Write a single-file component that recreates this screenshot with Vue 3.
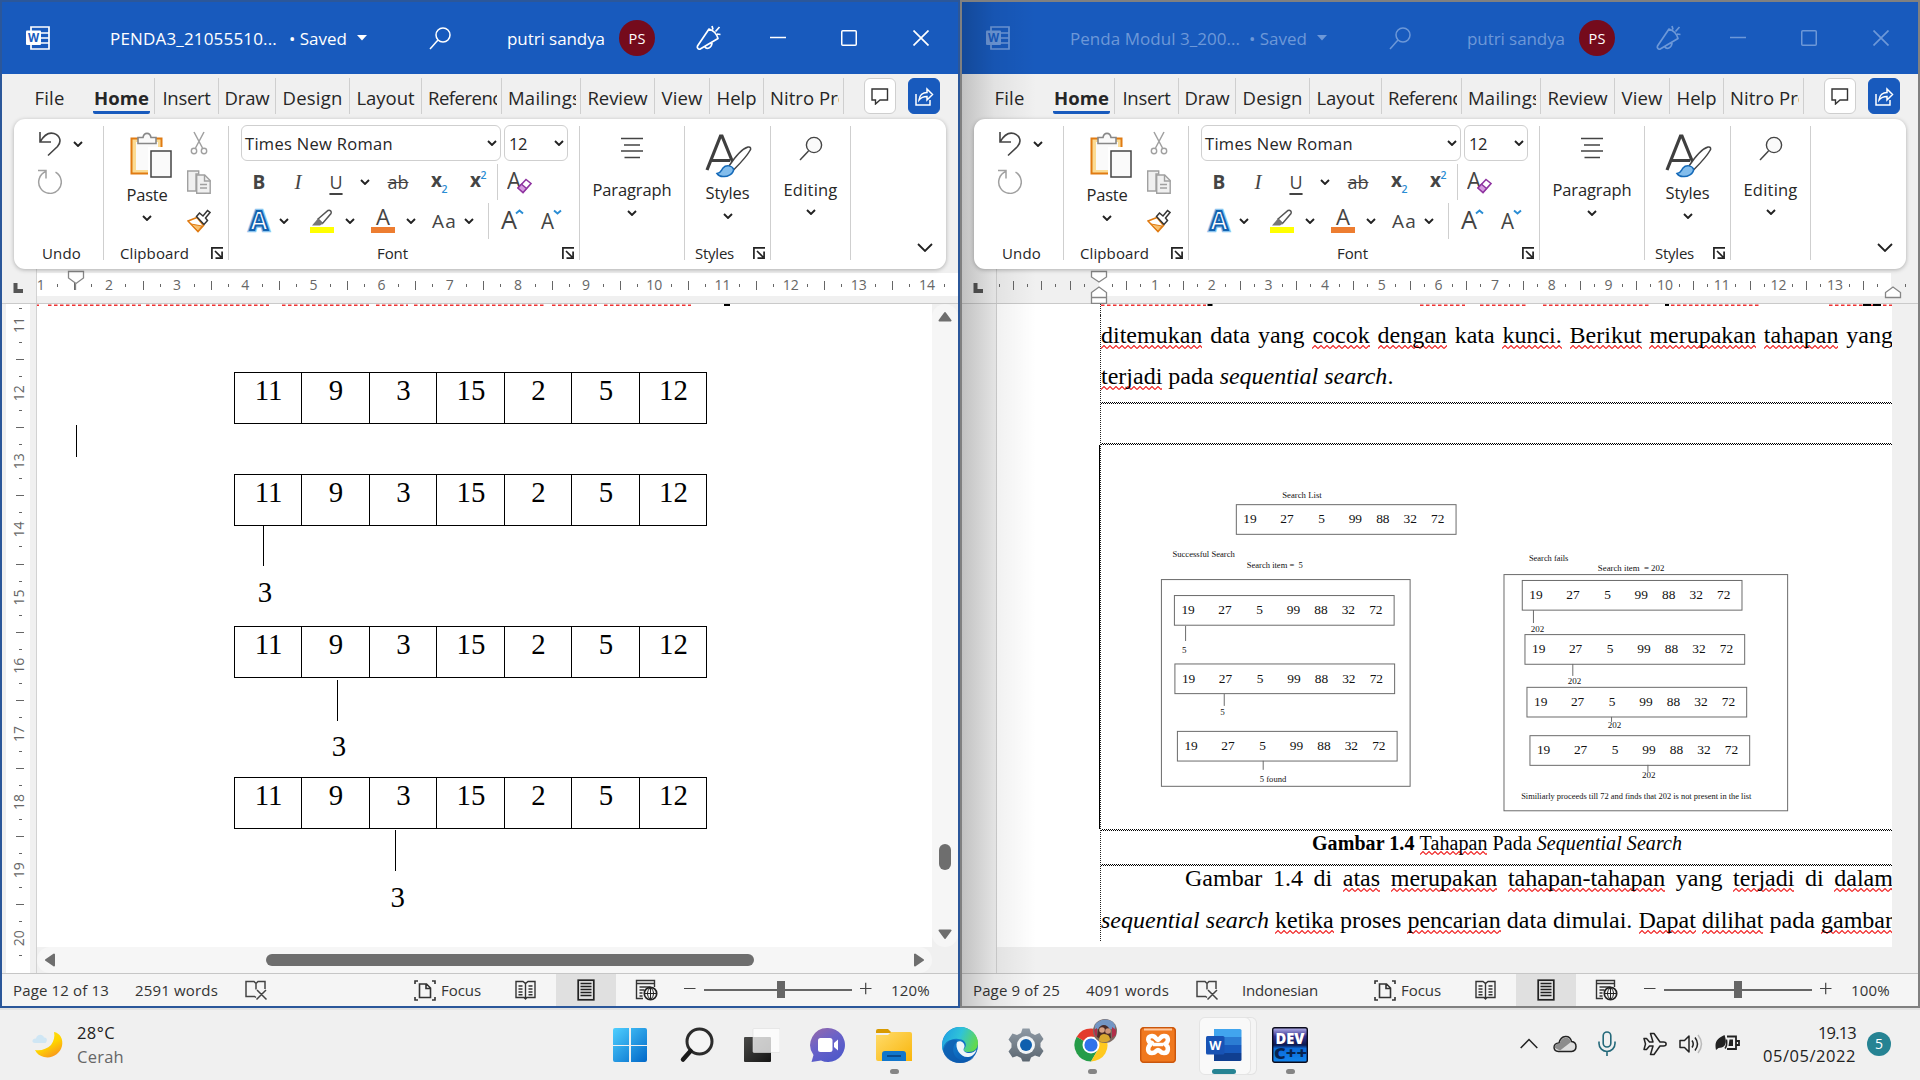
<script setup>
// Adjusts letter spacing so a label takes the given width in pixels.
const vFit = {
  mounted(el, { value }) {
    const range = document.createRange()
    range.selectNodeContents(el)
    const w = range.getBoundingClientRect().width
    const n = el.textContent.length
    el.style.letterSpacing = ((value - w) / n).toFixed(3) + 'px'
  },
}

const tabs = [
  { t: 'File', w: 78, f: 30 },
  { t: 'Home', w: 75, f: 55, on: true },
  { t: 'Insert', w: 64, f: 48 },
  { t: 'Draw', w: 57, f: 45 },
  { t: 'Design', w: 74, f: 60 },
  { t: 'Layout', w: 72, f: 58 },
  { t: 'References', w: 80, f: 91, cut: true },
  { t: 'Mailings', w: 79, f: 73, cut: true },
  { t: 'Review', w: 74, f: 60 },
  { t: 'View', w: 55, f: 41 },
  { t: 'Help', w: 54, f: 40 },
  { t: 'Nitro Pro', w: 80, f: 79, cut: true },
]

function ruler(zero, unit, from, to) {
  const nums = []
  const ticks = []
  const first = Math.ceil(((from - zero) / unit) * 4)
  const last = Math.floor(((to - zero) / unit) * 4)
  for (let q = first; q <= last; q++) {
    const x = zero + (q * unit) / 4
    if (q % 4 === 0 && q > 0) nums.push({ x, n: q / 4 })
    else if (q !== 0) ticks.push({ x, long: q % 2 === 0 })
  }
  return { nums, ticks }
}

const windows = [
  {
    id: 'a', active: true, title: 'PENDA3_21055510...', tw: 167, page: 'Page 12 of 13', pw: 96,
    words: '2591 words', ww: 83, lang: '', zoom: '120%', thumb: 73,
    ruler: ruler(-27.4, 68.17, 38, 957),
  },
  {
    id: 'b', active: false, title: 'Penda Modul 3_200...', tw: 170, page: 'Page 9 of 25', pw: 87,
    words: '4091 words', ww: 83, lang: 'Indonesian', zoom: '100%', thumb: 70,
    ruler: ruler(138.4, 56.67, 38, 950),
  },
]
windows[1].ruler.nums = windows[1].ruler.nums.filter((n) => n.n < 14)

const vruler = ruler(325 - 11 * 68.15, 68.15, 330 - 24, 972)

const arr = [11, 9, 3, 15, 2, 5, 12]
const colX = [234.5, 301.5, 369.5, 436.5, 504.5, 571.5, 639.5, 706.5]
const steps = [
  { y: 372.5 },
  { y: 474.5, lx: 263.5, l1: 526, l2: 566, tx: 265, ty: 602 },
  { y: 626.5, lx: 337.5, l1: 680, l2: 721, tx: 339, ty: 756 },
  { y: 777.5, lx: 395.5, l1: 830, l2: 871, tx: 397.7, ty: 907 },
]

const list = [[19, 7], [27, 44], [5, 82], [99, 112.5], [88, 140], [32, 167.5], [72, 195]]
const boxes = [
  [1235.5, 504.5], [1173.5, 595.5], [1174, 664], [1176.5, 731.5],
  [1521.8, 580.4], [1524.5, 634.6], [1526.5, 687.4], [1529.5, 735.8],
]
const stems = [
  [1184.7, 626, 641], [1223.4, 694, 706], [1262.4, 761, 770],
  [1533, 610, 623], [1572.4, 664, 676], [1611.2, 717, 722], [1647.6, 765, 772],
]
const notes = [
  ['Search List', 1281.5, 498, 39.5], ['Successful Search', 1171.5, 557, 62.5],
  ['Search item =\u00a0 5', 1246, 568, 56], ['5', 1181, 653.5, 4.5], ['5', 1219.3, 715.5, 4.5],
  ['5 found', 1259, 782, 26.5], ['Search fails', 1528.5, 561.3, 39.5],
  ['Search item\u00a0 = 202', 1597.5, 570.5, 66.5], ['202', 1530.3, 632, 13.5],
  ['202', 1567.3, 683.7, 13.5], ['202', 1607.5, 728.3, 13.5], ['202', 1641.7, 777.7, 13.5],
  ['Similiarly proceeds till 72 and finds that 202 is not present in the list', 1520.7, 799.7, 230.5],
]

// Document lines: [word, misspelled, italic]
const line1 = [['ditemukan', 1], ['data'], ['yang'], ['cocok', 1], ['dengan', 1], ['kata'], ['kunci.', 1], ['Berikut', 1], ['merupakan', 1], ['tahapan', 1], ['yang']]
const line3 = [['Gambar'], ['1.4'], ['di'], ['atas', 1], ['merupakan', 1], ['tahapan-tahapan', 1], ['yang'], ['terjadi', 1], ['di'], ['dalam', 1]]
const line4 = [['sequential', 0, 1], ['search', 0, 1], ['ketika', 1], ['proses'], ['pencarian', 1], ['data'], ['dimulai.'], ['Dapat', 1], ['dilihat', 1], ['pada'], ['gambar', 1]]

const wavesA = [[36, 39], [48, 141], [146, 269], [282, 369], [376, 408], [414, 545], [552, 597], [604, 691]]
const wavesB = [[141, 246], [460, 505], [520, 567], [583, 690], [705, 799], [869, 932]]
</script>

<template>
  <div class="screen">
    <svg class="defs" width="0" height="0">
      <defs>
        <linearGradient id="gWin" x1="0" y1="0" x2="1" y2="1"><stop offset="0" stop-color="#4fd0ff" /><stop offset="1" stop-color="#0067c8" /></linearGradient>
        <linearGradient id="gChat" x1="0" y1="0" x2="0.6" y2="1"><stop offset="0" stop-color="#9a6aa8" /><stop offset=".5" stop-color="#6a62c8" /><stop offset="1" stop-color="#5059c9" /></linearGradient>
        <linearGradient id="gFold" x1="0" y1="0" x2="1" y2="1"><stop offset="0" stop-color="#ffdc6b" /><stop offset="1" stop-color="#f9b50b" /></linearGradient>
        <linearGradient id="gMoon" x1="0" y1="0" x2="0.6" y2="1"><stop offset="0" stop-color="#ffe11a" /><stop offset=".6" stop-color="#ffd400" /><stop offset="1" stop-color="#f99b1c" /></linearGradient>
        <linearGradient id="gEdge" x1="0" y1="0.2" x2="1" y2="0.5"><stop offset="0" stop-color="#1fa0e4" /><stop offset=".5" stop-color="#2fc3d8" /><stop offset="1" stop-color="#63d94e" /></linearGradient>
        <linearGradient id="gEdge2" x1="0" y1="0" x2="0.6" y2="1"><stop offset="0" stop-color="#1794dd" /><stop offset="1" stop-color="#0a5cb4" /></linearGradient>
        <linearGradient id="gDev" x1="0" y1="0" x2="0" y2="1"><stop offset="0" stop-color="#b9b6f0" /><stop offset=".25" stop-color="#34308c" /><stop offset=".5" stop-color="#0c1a50" /><stop offset=".6" stop-color="#0c6ad8" /><stop offset="1" stop-color="#1286ee" /></linearGradient>
        <linearGradient id="gTask" x1="0" y1="0" x2="1" y2="1"><stop offset="0" stop-color="#4a4a48" /><stop offset="1" stop-color="#151515" /></linearGradient>
        <linearGradient id="gGear" x1="0" y1="0" x2="0" y2="1"><stop offset="0" stop-color="#8f9aa5" /><stop offset="1" stop-color="#5b6670" /></linearGradient>
      </defs>
      <symbol id="chev" viewBox="0 0 10 6"><path d="M1 1l4 4 4-4" fill="none" stroke="#222" stroke-width="1.9" /></symbol>
      <symbol id="launch" viewBox="0 0 12 12"><path d="M.9 12V.9H12M4 4l6 6M11.1 4.5v6.6H4.5" fill="none" stroke="#222" stroke-width="1.7" /></symbol>
      <symbol id="mag" viewBox="0 0 22 23"><circle cx="14" cy="8" r="7" fill="none" stroke="currentColor" stroke-width="1.5" /><path d="M9 13L1 22" stroke="currentColor" stroke-width="1.5" /></symbol>
      <symbol id="horn" viewBox="0 0 26 26"><path d="M14 4L2.500 21c-.7 1.500.5 3.500 2.300 3.200L23 13.500a14 14 0 0 0-9-9.500zM10 22c1.500 2.500 6.500 1.500 7-4M17 1l1 3.500M20.500 6.500l4-4.500M22 9l3.500.5" fill="none" stroke="currentColor" stroke-width="1.7" stroke-linejoin="round" /></symbol>
    </svg>

    <div class="desktop">
      <section v-for="w in windows" :key="w.id" class="win" :class="{ idle: !w.active }">
        <header class="title">
          <svg class="t-word" width="24" height="24"><path d="M5 5V1h18v22H5v-4M14 7h9M14 12h9M14 17h9" fill="none" stroke="currentColor" stroke-width="1.7" /><rect x="0" y="4.5" width="15" height="14.5" rx="1" fill="currentColor" /><text x="7.5" y="16.2" text-anchor="middle" font-family="Open Sans, sans-serif" font-weight="700" font-size="11.5" fill="#185abd">W</text></svg>
          <span v-fit="w.tw" class="t-name">{{ w.title }}</span>
          <span v-fit="58" class="t-saved">• Saved</span>
          <svg class="t-caret" width="10" height="6"><path d="M0 0h10L5 5.500z" fill="currentColor" /></svg>
          <svg class="t-mag" width="22" height="23"><use href="#mag" /></svg>
          <span v-fit="98" class="t-user">putri sandya</span>
          <span class="avatar"><b v-fit="17">PS</b></span>
          <svg class="t-horn" width="26" height="26"><use href="#horn" /></svg>
          <svg class="t-min" width="16" height="16"><path d="M0 7.500h16" stroke="currentColor" stroke-width="1.500" /></svg>
          <svg class="t-ctl" width="16" height="16"><rect x=".75" y=".75" width="14.500" height="14.500" rx="1" fill="none" stroke="currentColor" stroke-width="1.500" /></svg>
          <svg class="t-ctl" width="16" height="16"><path d="M.5.5l15 15M15.500.5l-15 15" stroke="currentColor" stroke-width="1.700" /></svg>
        </header>

        <nav class="tabs">
          <div v-for="t in tabs" :key="t.t" class="tab" :class="{ on: t.on, cut: t.cut, file: t.t === 'File' }" :style="{ width: t.w + 'px' }">
            <div class="lbl"><span v-fit="t.f">{{ t.t }}</span></div>
          </div>
          <button class="btn cm"><svg width="18" height="17"><path d="M1 1h15.500v11H9l-4.500 4v-4H1z" fill="none" stroke="#333" stroke-width="1.400" /></svg></button>
          <button class="btn sh"><svg width="19" height="19"><path d="M1 7v11h14v-5M4 13c.5-5 4-7.500 8-7.500V2l5.500 5.500L12 13V9.500c-3.500 0-6 1-8 3.500z" fill="none" stroke="#fff" stroke-width="1.500" /></svg></button>
        </nav>

        <div class="ribbon">
          <div class="grp undo">
            <div class="body">
              <div class="u1">
                <svg width="24" height="26"><path d="M2 1v10h11M2 11C6 4 11 1 16 2.500c6 2 8 8 3.500 13L10 24.500" fill="none" stroke="#444" stroke-width="1.600" /></svg>
                <svg width="10" height="6"><use href="#chev" /></svg>
              </div>
              <svg class="u2" width="25" height="25"><path d="M1 1.500h8v8M9 2.500A11.300 11.300 0 1 0 18.500 3.200" fill="none" stroke="#a0a0a0" stroke-width="1.500" /></svg>
            </div>
            <div class="cap"><span v-fit="39">Undo</span></div>
          </div>

          <div class="grp clip">
            <div class="body">
              <div class="big paste">
                <svg width="42" height="46"><rect x="1.500" y="6.500" width="30" height="35" fill="#fbdb94" stroke="#e07b12" stroke-width="2" /><rect x="6" y="10" width="22" height="28" fill="#fafafa" /><path d="M8 11.500V5.500h5c1-5.500 7-5.500 8 0h5v6z" fill="#fafafa" stroke="#888" stroke-width="1.600" /><path d="M18 15h24v30H18z" fill="#fff" /><rect x="21" y="19" width="20" height="26" fill="#fafafa" stroke="#444" stroke-width="1.500" /></svg>
                <span v-fit="41">Paste</span>
                <svg width="10" height="6"><use href="#chev" /></svg>
              </div>
              <div class="stack">
                <svg width="24" height="24"><path d="M7 1l8.500 16M17 1L8.500 17" fill="none" stroke="#a0a0a0" stroke-width="1.500" /><circle cx="7" cy="20" r="2.700" fill="none" stroke="#a0a0a0" stroke-width="1.400" /><circle cx="17" cy="20" r="2.700" fill="none" stroke="#a0a0a0" stroke-width="1.400" /></svg>
                <svg width="24" height="24"><path d="M.7 1h11v3H9v17H.7z" fill="#f0f0f0" stroke="#a0a0a0" stroke-width="1.400" /><path d="M9.700 5h8l5.500 5.500v12.700H9.700z" fill="#f0f0f0" stroke="#a0a0a0" stroke-width="1.400" /><path d="M17.500 5v6h6M13 14.500h7M13 18h7" fill="none" stroke="#a0a0a0" stroke-width="1.400" /></svg>
                <svg width="24" height="24"><path d="M1 12l9-3.500 6.500 8L11 22.500z" fill="#fff" stroke="#e07b12" stroke-width="1.600" /><path d="M4 15l11 2-4 5z" fill="#f8c070" stroke="#e07b12" /><path d="M9.500 7.500l3-3.500 3.500 3 4.500-5.500 2.500 2-4.500 5.500 2 2.500-3.500 4z" fill="#fff" stroke="#333" stroke-width="1.500" /></svg>
              </div>
            </div>
            <div class="cap"><span v-fit="69">Clipboard</span><svg width="12" height="12"><use href="#launch" /></svg></div>
          </div>

          <div class="grp font">
            <div class="r1">
              <div class="combo wide"><span v-fit="148">Times New Roman</span><svg width="10" height="6"><use href="#chev" /></svg></div>
              <div class="combo"><span v-fit="18">12</span><svg width="10" height="6"><use href="#chev" /></svg></div>
            </div>
            <div class="r2">
              <b class="g">B</b><i class="g it">I</i><span class="g un">U</span>
              <svg width="10" height="6"><use href="#chev" /></svg>
              <span class="g st">ab</span>
              <svg width="20" height="26"><text class="sx" x="1" y="18">x</text><text class="sn" x="11.500" y="23.500">2</text></svg>
              <svg width="20" height="26"><text class="sx" x="1" y="18">x</text><text class="sn" x="11.500" y="9.500">2</text></svg>
              <div class="bar"><svg width="26" height="26"><text x="0" y="20" class="ic" font-size="24" textLength="14" lengthAdjust="spacingAndGlyphs">A</text><path d="M11 19l8-8.500 5 4-8 9z" fill="#fff" stroke="#8f34a0" stroke-width="1.600" /><path d="M11 19l3.500-3.800 5 4.200-3.500 4z" fill="#d59ae0" stroke="#8f34a0" stroke-width="1.300" /></svg></div>
            </div>
            <div class="r3">
              <svg width="26" height="26"><text x="13" y="22" text-anchor="middle" font-family="Open Sans, sans-serif" font-weight="700" font-size="26" fill="none" stroke="#8cc4ee" stroke-width="4.500">A</text><text x="13" y="22" text-anchor="middle" font-family="Open Sans, sans-serif" font-weight="700" font-size="26" fill="#fff" stroke="#1263b0" stroke-width="2">A</text></svg>
              <svg width="10" height="6"><use href="#chev" /></svg><i />
              <svg width="26" height="26"><path d="M9 11L19 2.500c2-1 4 1 3 3L13.500 15.500z" fill="#fff" stroke="#555" stroke-width="1.500" /><path d="M9 10.500l5 5-3 2H3z" fill="#777" /><rect x="1" y="19" width="24" height="6" fill="#ff0" /></svg>
              <svg width="10" height="6"><use href="#chev" /></svg><i />
              <svg width="26" height="26"><text x="6" y="16.500" class="ic" font-size="22" textLength="14" lengthAdjust="spacingAndGlyphs">A</text><rect x="1" y="19" width="24" height="6" fill="#ed7d31" /></svg>
              <svg width="10" height="6"><use href="#chev" /></svg><i />
              <span v-fit="25" class="aa">Aa</span>
              <svg width="10" height="6"><use href="#chev" /></svg><i />
              <div class="bar"><svg width="24" height="26"><text x="1" y="21" class="ic" font-size="26" textLength="16" lengthAdjust="spacingAndGlyphs">A</text><path d="M16 5.500l3.500-3 3.500 3" fill="none" stroke="#2a8dd4" stroke-width="1.900" /></svg></div>
              <svg width="24" height="26"><text x="2" y="21" class="ic" font-size="21" textLength="13" lengthAdjust="spacingAndGlyphs">A</text><path d="M15 2.500l3.500 3 3.500-3" fill="none" stroke="#2a8dd4" stroke-width="1.900" /></svg>
            </div>
            <div class="cap"><span v-fit="31">Font</span><svg width="12" height="12"><use href="#launch" /></svg></div>
          </div>

          <div class="grp para">
            <div class="big">
              <svg width="22" height="22"><path d="M0 1.500h22M3 8h16M0 14h22M3.500 20.500h15.500" stroke="#444" stroke-width="1.400" /></svg>
              <span v-fit="79">Paragraph</span>
              <svg width="10" height="6"><use href="#chev" /></svg>
            </div>
          </div>

          <div class="grp styl">
            <div class="big">
              <svg class="brush" width="48" height="46"><path d="M2 38L15.500 4h1.500L28 31M7 28.500h18" fill="none" stroke="#3f3f3f" stroke-width="3.200" /><path d="M24 34C30 25 38 16.500 43 15c2.500-.5 3.500 1.500 2 3.500-4 7-11 14-16 19z" fill="#fff" stroke="#444" stroke-width="1.500" /><path d="M12 41.500c4-.5 4-3 6-5.500 3-3.500 9-2.500 10.500 1 .5 5-6.500 8-10.500 7.500-2.500 0-5-1.500-6-3z" fill="#83bdec" stroke="#1469b8" stroke-width="1.500" /></svg>
              <span v-fit="44">Styles</span>
              <svg width="10" height="6"><use href="#chev" /></svg>
            </div>
            <div class="cap"><span v-fit="39">Styles</span><svg width="12" height="12"><use href="#launch" /></svg></div>
          </div>

          <div class="grp edit">
            <div class="big">
              <svg width="24" height="25"><circle cx="15" cy="9" r="7.600" fill="#fafafa" stroke="#444" stroke-width="1.400" /><path d="M9.500 15L1 24" stroke="#444" stroke-width="1.500" /></svg>
              <span v-fit="54">Editing</span>
              <svg width="10" height="6"><use href="#chev" /></svg>
            </div>
          </div>
          <svg class="fold" width="16" height="9"><path d="M1 1l7 7 7-7" fill="none" stroke="#222" stroke-width="1.800" /></svg>
        </div>

        <svg class="ruler" width="956" height="35" viewBox="2 269 956 35">
          <rect :x="w.active ? 37 : 139" y="273" :width="w.active ? 921 : 792" height="23" fill="#fff" />
          <path d="M36.500 269v35" stroke="#d2d2d2" />
          <path d="M2 303.500h956" stroke="#cacaca" />
          <path d="M15.500 283v8h7.500" fill="none" stroke="#555" stroke-width="4" />
          <path v-for="t in w.ruler.ticks" :key="t.x" :d="t.long ? `M${Math.round(t.x - .5) + .5} 281v9` : `M${Math.round(t.x - .5) + .5} 284v3`" stroke="#666" />
          <text v-for="n in w.ruler.nums" :key="n.n" :x="n.x" y="290.300" class="rn">{{ n.n }}</text>
          <g fill="#fff" stroke="#868686" stroke-width="1.300">
            <template v-if="w.active"><path d="M68.500 271.500h15v6.500L76 283.500l-7.500-5.500z" /><path d="M75.500 284v6" /></template>
            <template v-else>
              <path d="M131.500 271.500h15v5.500l-7.500 5-7.500-5zM131.500 292.500l7.500-5.500 7.500 5.500v5h-15zM131.500 297.500h15v6h-15z" />
              <path d="M925.500 292.500l7.500-5.500 7.500 5.500v5h-15z" />
            </template>
          </g>
        </svg>

        <div class="work">
          <div class="gutter">
            <svg v-if="w.active" width="34" height="669" viewBox="2 304 34 669">
              <rect x="6" y="304" width="24" height="669" fill="#fff" />
              <path v-for="t in vruler.ticks" :key="t.x" :d="t.long ? `M16 ${Math.round(t.x) + .5}h8` : `M19 ${Math.round(t.x) + .5}h3`" stroke="#666" />
              <text v-for="n in vruler.nums" :key="n.n" class="rn" :transform="`translate(24 ${n.x}) rotate(-90)`">{{ n.n }}</text>
            </svg>
          </div>

          <div v-if="w.active" class="pane">
            <div class="prow">
              <svg class="page" width="895" height="643" viewBox="37 304 895 643">
                <path v-for="s in wavesA" :key="s[0]" :d="`M${s[0]} 305.200H${s[1]}`" stroke="#e33" stroke-width="1.600" stroke-dasharray="3.500 2.500" />
                <path d="M724 305h6" stroke="#000" stroke-width="2" />
                <path d="M76.500 425v32" stroke="#000" />
                <g v-for="s in steps" :key="s.y">
                  <rect x="234.500" :y="s.y" width="472" height="51" fill="none" stroke="#000" />
                  <path v-for="c in colX.slice(1, 7)" :key="c" :d="`M${c} ${s.y}v51`" stroke="#000" />
                  <text v-for="(v, i) in arr" :key="i" class="num" :x="(colX[i] + colX[i + 1]) / 2 + .5" :y="s.y + 27.500">{{ v }}</text>
                  <template v-if="s.lx"><path :d="`M${s.lx} ${s.l1}V${s.l2}`" stroke="#000" /><text class="num" :x="s.tx" :y="s.ty">3</text></template>
                </g>
              </svg>
              <svg class="vs" width="26" height="643" viewBox="932 304 26 643">
                <path d="M932 304h26v643h-26z" fill="#f0f0f0" /><rect x="932" y="304" width="26" height="643" rx="13" fill="#f6f6f6" />
                <path d="M945 313l5.500 7.500h-11zM945 938l5.500-7.500h-11z" fill="#6e6e6e" stroke="#6e6e6e" stroke-width="2" stroke-linejoin="round" />
                <rect x="939" y="844" width="12" height="26" rx="6" fill="#6e6e6e" />
              </svg>
            </div>
            <svg class="hs" width="921" height="26" viewBox="37 947 921 26">
              <rect x="37" y="947" width="895" height="26" rx="13" fill="#f6f6f6" />
              <path d="M46 960l8-5.500v11zM923 960l-8-5.500v11z" fill="#6e6e6e" stroke="#6e6e6e" stroke-width="2" stroke-linejoin="round" />
              <rect x="266" y="954" width="488" height="12" rx="6" fill="#6e6e6e" />
            </svg>
          </div>

          <div v-else class="pane">
            <div class="page doc">
              <svg class="top" width="895" height="11" viewBox="37 304 895 11">
                <path v-for="s in wavesB" :key="s[0]" :d="`M${s[0]} 305.200H${s[1]}`" stroke="#e33" stroke-width="1.600" stroke-dasharray="3.500 2.500" />
                <path d="M247.500 305h5M705 305h4M903 305h8M913 305h8" stroke="#000" stroke-width="2" />
                <path d="M140.500 304v11" stroke="#222" stroke-dasharray="1 1" />
              </svg>
              <div class="sheet">
                <div class="ln just"><span v-for="(x, i) in line1" :key="i" :class="{ bad: x[1] }">{{ x[0] }}</span></div>
                <div class="ln end"><span class="bad">terjadi</span> pada <em>sequential search</em>.</div>
                <div class="rule" />
                <div class="blank" />
                <div class="rule" />
                <svg class="fig" width="793" height="384" viewBox="1099 445 793 384">
                  <g fill="none" stroke="#6b6b6b">
                    <rect x="1160.500" y="579.500" width="249" height="207" />
                    <rect x="1503.500" y="574.500" width="284" height="236.500" />
                    <rect v-for="b in boxes" :key="b[0] + b[1]" :x="b[0]" :y="b[1]" width="220" height="29.700" />
                    <path v-for="s in stems" :key="s[0]" :d="`M${s[0]} ${s[1]}V${s[2]}`" />
                  </g>
                  <g v-for="b in boxes" :key="b[0] + b[1]"><text v-for="l in list" :key="l[0]" class="fn" :x="b[0] + l[1]" :y="b[1] + 18.800">{{ l[0] }}</text></g>
                  <text v-for="(n, i) in notes" :key="i" class="nt" :x="n[1]" :y="n[2]" :textLength="n[3]" lengthAdjust="spacingAndGlyphs">{{ n[0] }}</text>
                </svg>
                <div class="rule" />
                <div class="capt"><span v-fit="370"><b>Gambar 1.4</b> <span class="bad">Tahapan</span> Pada <em>Sequential Search</em></span></div>
                <div class="rule" />
                <div class="ln just ind"><span v-for="(x, i) in line3" :key="i" :class="{ bad: x[1] }">{{ x[0] }}</span></div>
                <div class="ln just"><span v-for="(x, i) in line4" :key="i" :class="{ bad: x[1], ital: x[2] }">{{ x[0] }}</span></div>
              </div>
            </div>
          </div>
        </div>

        <footer class="status">
          <span v-fit="w.pw" class="s-page">{{ w.page }}</span>
          <span v-fit="w.ww" class="s-words">{{ w.words }}</span>
          <svg class="s-proof" width="23" height="21"><path d="M11 17.500L9.500 16.500H1V1.500h8l2 2 2-2h7V9M11 3.500v6M12 10l9.500 9.500M21 10l-9.500 9.500" fill="none" stroke="#444" stroke-width="1.500" /></svg>
          <span v-if="w.lang" v-fit="76" class="s-lang">{{ w.lang }}</span>
          <span class="grow" />
          <svg width="22" height="21"><path d="M4 1H1v3M18 1h3v3M4 20H1v-3M18 20h3v-3M5.500 4h7l4 4v9.500h-11zM12 4v4.500h4.500" fill="none" stroke="#333" stroke-width="1.600" /></svg>
          <span v-fit="40" class="s-focus">Focus</span>
          <svg class="s-read" width="21" height="20"><path d="M10.500 19l-1.500-1.500H1v-16h7l2.500 2 2.500-2h7v16h-8z M10.500 3v16M3.500 6h4M3.500 9h4M3.500 12h4M3.500 14.800h4M13.500 6h4M13.500 9h4M13.500 12h4M13.500 14.800h4" fill="none" stroke="#333" stroke-width="1.400" /></svg>
          <span class="s-print"><svg width="18" height="22"><rect x="1.200" y="1.200" width="15.600" height="19.600" fill="none" stroke="#222" stroke-width="1.700" /><path d="M3.500 4.500h11M3.500 7.500h11M3.500 10.500h11M3.500 13.500h11M3.500 16.500h11" stroke="#222" stroke-width="1.300" /></svg></span>
          <svg class="s-web" width="23" height="22"><path d="M8 19.500H1.500v-18h18V8M1.500 4.500h18M4.500 8h11M4.500 11h5M4.500 14h3M4.500 17h3" fill="none" stroke="#333" stroke-width="1.400" /><circle cx="15.500" cy="14.500" r="6.200" fill="#f5f5f5" stroke="#222" stroke-width="1.700" /><path d="M9.500 14.500h12M15.500 8.500v12M15.500 8.500c-4 3.500-4 8.500 0 12M15.500 8.500c4 3.500 4 8.500 0 12" fill="none" stroke="#222" /></svg>
          <svg class="s-zoom" width="188" height="20"><path d="M0 8.500h11.500M176 8.500h11.500M181.700 2.800v11.500" stroke="#444" stroke-width="1.200" /><path d="M20 10h148" stroke="#666" stroke-width="2" /><rect :x="w.thumb + 20" y="1" width="8" height="17" fill="#666" /></svg>
          <span v-fit="39" class="s-pct">{{ w.zoom }}</span>
        </footer>
        <div v-if="!w.active" class="shade" />
      </section>
    </div>

    <div class="taskbar">
      <div class="weather">
        <svg width="34" height="34"><path d="M23 3c6 1 9.500 7 8 14-2 8-10 13-18 11-4-1-7-3-9-7 6 1 12-1 16-5 3-4 4-9 3-13z" fill="url(#gMoon)" /><path d="M4 14c-4 0-3-5 1-4.500 1-5 7-4.500 8-1 3-.5 4 3 1.500 5.500z" fill="#cfe6f4" /></svg>
        <div><span v-fit="38">28°C</span><span v-fit="47" class="dim">Cerah</span></div>
      </div>

      <div class="apps">
        <div class="app"><svg width="36" height="36"><path d="M1 3q0-2 2-2h14v17H1zM19 1h14q2 0 2 2v15H19zM1 19h16v16H3q-2 0-2-2zM19 19h16v14q0 2-2 2H19z" fill="url(#gWin)" /></svg></div>
        <div class="app"><svg width="36" height="36"><circle cx="21.500" cy="14.500" r="12.500" fill="#f4f4f4" stroke="#2c2c2c" stroke-width="3" /><path d="M12.500 24L5 32.500" stroke="#1a1a1a" stroke-width="4.500" stroke-linecap="round" /></svg></div>
        <div class="app"><svg width="36" height="36"><rect x="0" y="10" width="27" height="25" rx="1" fill="url(#gTask)" /><rect x="9" y="1.500" width="27" height="24" rx="1" fill="#fff" fill-opacity=".75" stroke="#ddd" stroke-width=".6" /></svg></div>
        <div class="app"><svg width="36" height="36"><path d="M18 1a17 17 0 1 1-7 32.500L1.500 35l2-7A17 17 0 0 1 18 1z" fill="url(#gChat)" /><rect x="8" y="11" width="14.500" height="14" rx="2.500" fill="#fff" /><path d="M24 16l4-3.500v11L24 20z" fill="#fff" /></svg></div>
        <div class="app"><svg width="36" height="36"><path d="M0 4q0-2 2-2h10l4 4H0z" fill="#d89a00" /><path d="M0 8h12l3-3h19q2 0 2 2v27H2q-2 0-2-2z" fill="url(#gFold)" /><path d="M6 34v-7q0-3 3-3h18q3 0 3 3v7z" fill="#1176cc" /><path d="M11 29h14" stroke="#0a4a8c" stroke-width="2" /></svg><i class="dot" /></div>
        <div class="app"><svg width="36" height="36"><circle cx="18" cy="18" r="18" fill="url(#gEdge2)" /><path d="M1 13C4 4 11 0 18 0c11 0 18 8 18 16 0 6-4 9-9 9-4 0-6-1-5-3 4-4 1-10-6-10C9 11 4 15 1 24-.5 20 0 16 1 13z" fill="url(#gEdge)" /><path d="M16 14c-4 2-6 8-4 13 3 7 12 9 20 3-3 4-9 6-14 6C8 36 1 29 1 22 2 14 10 11 16 14z" fill="#0d57a8" opacity=".6" /><path d="M15 15c4-2 8 1 7.500 5-1 2-1.500 3 0 4.500 4 3 10 1 12-2-1 4-4 7-8 7.500-8 1-14-9-11.500-15z" fill="#eef5f9" /></svg></div>
        <div class="app"><svg width="36" height="36"><path d="M14.500 1.500h7l1.500 4.500 4 2 4.500-2 4 6-3 4v4l3 4-4 6-4.500-1.500-4 2-1.500 4h-7L13 31l-4-2-4.500 1.500-4-6 3-4v-4l-3-4 4-6L9 8l4-2z" fill="url(#gGear)" /><circle cx="18" cy="18" r="9" fill="#f1f4f6" /><circle cx="18" cy="18" r="6" fill="#0f5fae" /></svg></div>
        <div class="app"><svg class="wide" width="46" height="44"><g transform="translate(0 8)"><path d="M17 18L2.700 9.750A16.500 16.500 0 0 0 17 34.500l7-12z" fill="#259c48" /><path d="M17 10h14.500A16.500 16.500 0 0 1 17 34.500l7-12z" fill="#ffc91f" /><path d="M17 18L2.700 9.750A16.500 16.500 0 0 1 31.300 9.750L17 10z" fill="#e33b2e" /><circle cx="17" cy="18" r="8.500" fill="#fff" /><circle cx="17" cy="18" r="6.600" fill="#2e72ea" /></g><circle cx="31" cy="12" r="12" fill="#7c6a62" /><path d="M20.500 7q3-6 10.500-6.500T41.500 7l-1 3H21z" fill="#7396c4" /><path d="M24 11c2-6 9-7 12 0l1 8-8 3-6-4z" fill="#4a2c28" /><circle cx="28" cy="11" r="2.800" fill="#d8a284" /><circle cx="34" cy="12" r="2.800" fill="#cf9678" /><path d="M25 22q0-7 5-7 6 0 6 6-5 4-11 1z" fill="#d9a72f" /><path d="M38 8l4 3v5l-4 3zM20 11l3-2v9l-2-2z" fill="#b02f4a" /></svg><i class="dot" /></div>
        <div class="app"><svg width="36" height="36"><rect width="36" height="36" rx="4" fill="#f0781e" /><rect x=".7" y=".7" width="34.600" height="34.600" rx="3.500" fill="none" stroke="#c9560d" stroke-width="1.400" /><path d="M4 2.500h28" stroke="#ffc9a0" stroke-width="2" /><path d="M12 16c-5-1-5-7 0-7 4 0 4 4 6 4s2-4 6-4c5 0 5 6 1 8 4 2 4 9-1 9-4 0-4-3-6-3s-2 3-6 3c-5 0-5-6-1-9z" fill="none" stroke="#fff" stroke-width="4.500" stroke-linejoin="round" /><path d="M13 17.500h10" stroke="#fff" stroke-width="3.500" /></svg></div>
        <div class="app cur"><svg width="36" height="36"><path d="M8 2h26q1.500 0 1.500 1.500V10H8z" fill="#41a5ee" /><path d="M8 10h27.500v8H8z" fill="#2b7cd3" /><path d="M8 18h27.500v8H8z" fill="#185abd" /><path d="M8 26h27.500v6.500Q35.500 34 34 34H8z" fill="#103f91" /><rect x="0" y="9" width="18.500" height="18.500" rx="1.500" fill="#1853b5" /><text x="9.200" y="22.700" text-anchor="middle" font-family="Open Sans, sans-serif" font-weight="700" font-size="12.500" fill="#fff">W</text></svg><i class="dot on" /></div>
        <div class="app"><svg width="36" height="36"><rect x=".7" y=".7" width="34.600" height="34.600" rx="2" fill="url(#gDev)" stroke="#0b0b1c" stroke-width="1.400" /><text x="18" y="16.500" text-anchor="middle" textLength="29" lengthAdjust="spacingAndGlyphs" font-family="Open Sans, sans-serif" font-weight="800" font-size="15" fill="#fff">DEV</text><text x="18.500" y="32" text-anchor="middle" textLength="33" lengthAdjust="spacingAndGlyphs" font-family="Open Sans, sans-serif" font-weight="800" font-size="15" fill="#08234f">C++</text></svg><i class="dot" /></div>
      </div>

      <div class="tray">
        <svg width="18" height="11"><path d="M.7 10L9 1.500l8.300 8.500" fill="none" stroke="#222" stroke-width="1.500" /></svg>
        <svg class="y1" width="24" height="18"><path d="M5.500 16.500c-6-.5-6-8 .5-8.500C8-.5 17-.5 18.500 6.500c6 .5 6 9.500 0 10z" fill="#dedede" stroke="#222" stroke-width="1.500" /><path d="M2 13c-1-2.500 1-4.500 4.500-4.500 2-7 10-7.500 11.500-1.500L7 15.500z" fill="#8c8c8c" /></svg>
        <svg class="y2" width="18" height="25"><rect x="5.200" y="1" width="7.600" height="15" rx="3.800" fill="none" stroke="#24697a" stroke-width="1.600" /><path d="M1 10.500v2a8 8 0 0 0 16 0v-2M9 20.500V25" fill="none" stroke="#24697a" stroke-width="1.600" /></svg>
        <svg class="y3" width="24" height="24"><path d="M1 6.500h2.500L6.500 10H10L7.500 1.500h3.500l6 8.500h3.500c3.500 0 3.500 4 0 4H17l-6 8.500H7.500L10 14H6.500L3.500 17.500H1L2.500 12z" fill="none" stroke="#222" stroke-width="1.500" stroke-linejoin="round" /></svg>
        <svg class="y4" width="24" height="22"><path d="M1 7.500h4.500L10 3v16l-4.500-4.500H1z" fill="none" stroke="#222" stroke-width="1.500" stroke-linejoin="round" /><path d="M13 7.500q2.500 3.500 0 7M16 4.500q5 6.500 0 13" fill="none" stroke="#222" stroke-width="1.500" /><path d="M19 2q7 9 0 18" fill="none" stroke="#bbb" stroke-width="1.500" /></svg>
        <svg class="y4" width="25" height="20"><path d="M12 3.500h9v12.500h-9M21.500 8h2.500v4h-2.500" fill="none" stroke="#222" stroke-width="1.800" /><path d="M14.500 6.500h3.500v6.500h-4.500z" fill="#222" /><path d="M1 17C-1 8 3 5 9.500 2c3 8 1 13-6 13z" fill="#222" /><path d="M10 15.500q2.500-3 1.500-9" fill="none" stroke="#222" stroke-width="1.500" /></svg>
        <div class="clock"><span v-fit="38">19.13</span><span v-fit="93">05/05/2022</span></div>
        <span class="badge">5</span>
      </div>
    </div>
  </div>
</template>

<style>
body { margin: 0; overflow: hidden; }
</style>

<style scoped>
.screen { width: 1920px; height: 1080px; display: flex; flex-direction: column; overflow: hidden; background: #f0f0f0; font-family: "Open Sans", "Noto Sans", sans-serif; color: #262626; }
.screen * { box-sizing: border-box; }
.screen svg { display: block; flex: none; }
.screen span, .screen b { white-space: nowrap; }
.defs { position: absolute; }
.desktop { display: flex; height: 1008px; }
.win { position: relative; width: 960px; height: 1008px; border: 2px solid #2b579a; background: #f0f0f0; display: flex; flex-direction: column; overflow: hidden; }
.win.idle { border-color: #808080; }
.shade { position: absolute; left: -2px; top: 0; width: 76px; height: 1004px; background: linear-gradient(90deg, rgba(0,0,0,.2), rgba(0,0,0,.06) 45%, rgba(0,0,0,0)); }

.title { height: 72px; background: #185abd; color: #fff; display: flex; align-items: center; font-size: 17px; flex: none; }
.title span { flex: none; }
.idle .title { color: #6d98d8; }
.t-word { margin-left: 24px; }
.t-name { margin-left: 60px; width: 169px; }
.t-saved { margin-left: 10px; width: 58px; }
.t-caret { margin-left: 10px; }
.t-mag { margin-left: 62px; }
.t-user { margin-left: 56px; width: 98px; }
.title .avatar { margin-left: 14px; width: 36px; height: 36px; border-radius: 50%; background: #750b1c; color: #fff; display: flex; align-items: center; justify-content: center; font-size: 14.5px; }
.avatar b { font-weight: 400; }
.t-horn { margin-left: 40px; }
.t-min { margin-left: 49px; }
.t-ctl { margin-left: 55px; }
.t-ctl + .t-ctl { margin-left: 56px; }

.tabs { display: flex; height: 45px; padding-top: 4px; flex: none; font-size: 18.5px; }
.tab { height: 36px; border-right: 1px solid #cfcfcf; display: flex; justify-content: center; flex: none; }
.tab .lbl { line-height: 39px; }
.tab.file { border-right: 0; padding-left: 17px; }
.tab.on { font-weight: 700; justify-content: flex-end; padding-right: 4px; }
.tab.on .lbl { height: 36px; width: 57px; text-align: center; border-bottom: 3px solid #185abd; border-radius: 2px; }
.tab.cut { justify-content: flex-start; padding: 0 4px 0 6px; }
.tab.cut .lbl { overflow: hidden; width: 70px; }
.btn { height: 36px; width: 32px; border-radius: 6px; border: 1px solid #cfcfcf; background: #fff; padding: 0; display: flex; align-items: center; justify-content: center; }
.cm { margin-left: 20px; }
.sh { margin-left: 12px; background: #185abd; border-color: #185abd; }

.ribbon { margin-left: 12px; width: 932px; height: 150px; flex: none; border-radius: 11px; background: #fff; box-shadow: 0 1px 4px rgba(0,0,0,.28); padding-top: 7px; display: flex; position: relative; z-index: 1; }
.grp { height: 134px; border-right: 1px solid #cfcfcf; display: flex; flex-direction: column; font-size: 16.500px; }
.undo { width: 90px; } .clip { width: 125px; } .font { width: 351px; } .para { width: 105px; } .styl { width: 86px; } .edit { width: 80px; }
.body { display: flex; height: 116px; }
.undo .body { flex-direction: column; padding: 5px 0 0 24px; }
.u1 { display: flex; align-items: center; gap: 11px; }
.u2 { margin: 12px 0 0 -1px; }
.cap { margin-top: auto; height: 14px; line-height: 14px; display: flex; align-items: center; font-size: 15px; }
.undo .cap { padding-left: 28px; }
.clip .cap { padding-left: 16px; gap: 22px; }
.font .cap { padding-left: 148px; gap: 154px; }
.styl .cap { padding-left: 10px; gap: 19px; }
.big { display: flex; flex-direction: column; align-items: center; }
.paste { padding: 6px 0 0 3px; width: 83px; }
.paste svg:first-child { margin-left: 7px; }
.paste span { margin-top: 5px; line-height: 24px; }
.paste svg:last-child { margin-top: 8px; }
.stack { display: flex; flex-direction: column; gap: 15px; padding-top: 5px; }
.para .big { padding-top: 11px; } .para span { margin-top: 19px; line-height: 24px; } .para svg:last-child { margin-top: 8px; }
.styl .big { padding-top: 6px; } .styl .big span { margin-top: 3px; line-height: 24px; } .styl .big svg:last-child { margin-top: 8px; }
.styl .brush { margin-left: 2px; }
.edit .big { padding-top: 10px; } .edit span { margin-top: 17px; line-height: 24px; } .edit svg:last-child { margin-top: 7px; }
.r1 { display: flex; gap: 3px; padding-left: 12px; margin-top: -1px; }
.combo { width: 64px; height: 36px; border: 1px solid #cfcfcf; border-radius: 6px; display: flex; align-items: center; justify-content: space-between; padding: 0 3px 0 4px; font-size: 16.5px; }
.combo.wide { width: 260px; padding: 0 3px; }
.r2, .r3 { display: grid; height: 36px; margin-top: 3px; padding-left: 12px; align-items: center; justify-items: center; }
.r2 { grid-template-columns: 36px 42px 34px 24px 42px 42px 36px 44px; }
.r3 { grid-template-columns: 36px 14px 12px 38px 18px 6px 36px 20px 8px 31px 18px 10px 46px 34px; }
.bar { height: 36px; width: 100%; border-left: 1px solid #cfcfcf; display: flex; align-items: center; justify-content: center; }
.g { font-size: 19px; line-height: 24px; color: #444; }
.it { font-family: "Liberation Serif", serif; font-style: italic; font-size: 21px; }
.un { text-decoration: underline; text-underline-offset: 4px; text-decoration-thickness: 1.5px; font-size: 18px; }
.st { text-decoration: line-through; font-size: 18px; }
.sx { font: 700 19px "Open Sans", sans-serif; fill: #444; }
.sn { font: 600 10.5px "Open Sans", sans-serif; fill: #2a8dd4; }
.ic { font-family: "Open Sans", sans-serif; fill: #444; }
.aa { font-size: 19px; color: #444; }
.fold { margin: 117px 0 0 66px; }

.ruler { flex: none; }
.rn { font: 14px "Open Sans", sans-serif; fill: #666; text-anchor: middle; }
.work { display: flex; height: 669px; flex: none; }
.gutter { width: 35px; border-right: 1px solid #d2d2d2; flex: none; }
.pane { width: 921px; display: flex; flex-direction: column; }
.prow { display: flex; }
.page { background: #fff; }
.num { font: 28.8px "Liberation Serif", serif; text-anchor: middle; fill: #000; }

.doc { width: 895px; height: 643px; overflow: hidden; color: #000; font: 24px "Liberation Serif", serif; }
.sheet { margin-left: 103px; width: 792px; border-left: 1px dotted #222; display: flex; flex-direction: column; }
.ln { height: 41px; line-height: 41px; width: 792px; flex: none; }
.just { display: flex; justify-content: space-between; }
.ln.end { height: 46px; }
.rule { height: 2px; flex: none; background: repeating-conic-gradient(#000 0 25%, #fff 0 50%) 0 0 / 2px 2px; }
.blank { height: 39px; flex: none; }
.fig { border-left: 1px solid #000; margin-left: -2px; }
.fn { font: 13.4px "Liberation Serif", serif; fill: #111; }
.nt { font: 9px "Liberation Serif", serif; fill: #111; }
.bad { background: url("data:image/svg+xml,%3Csvg xmlns='http://www.w3.org/2000/svg' width='6' height='4'%3E%3Cpath d='M0 3.5L3 .5L6 3.5' fill='none' stroke='%23f02020' stroke-width='1.1'/%3E%3C/svg%3E") repeat-x 0 30px; display: inline-block; height: 41px; }
.ital, em { font-style: italic; }
.capt { height: 33px; font-size: 20px; line-height: 25px; display: flex; padding-left: 211px; flex: none; }
.capt .bad { height: 25px; background-position: 0 20px; }
.ind { padding-left: 84px; margin-top: -8px; height: 42px; }

.status { height: 33px; border-top: 1px solid #c6c6c6; background: #f5f5f5; display: flex; align-items: center; font-size: 15px; color: #333; padding: 0 28px 0 11px; flex: none; line-height: 33px; }
.s-words { margin-left: 26px; }
.s-proof { margin-left: 27px; }
.s-lang { margin-left: 23px; }
.grow { flex: 1; }
.s-focus { margin-left: 5px; }
.s-read { margin-left: 34px; }
.s-print { margin-left: 20px; width: 60px; height: 32px; background: #e0e0e0; display: flex; align-items: center; justify-content: center; }
.s-web { margin-left: 19px; }
.s-zoom { margin-left: 26px; }
.s-pct { margin-left: 19px; }

.taskbar { height: 72px; display: flex; border-top: 2px solid #e2e2e2; font-size: 16.5px; color: #222; }
.weather { width: 597px; padding-left: 31px; display: flex; padding-top: 19px; gap: 12px; }
.weather div { display: flex; flex-direction: column; line-height: 24px; margin-top: -8px; align-items: flex-start; }
.dim { color: #666; }
.apps { display: flex; }
.app { width: 66px; height: 70px; position: relative; display: flex; justify-content: center; padding-top: 17px; }
.app .wide { margin: -8px -10px 0 0; }
.dot { position: absolute; bottom: 6px; left: 29px; width: 9px; height: 5px; border-radius: 3px; background: #858585; }
.dot.on { left: 21px; width: 24px; background: #268393; }
.cur::before { content: ""; position: absolute; left: 8px; top: 7px; width: 50px; height: 56px; background: #f9f9f9; border: 1px solid #e4e4e4; border-radius: 6px; box-shadow: 6px 0 0 -1px #f5f5f5, 6px 0 0 0 #e2e2e2; }
.cur svg { position: relative; }
.tray { margin-left: auto; display: flex; align-items: flex-start; padding-right: 29px; height: 70px; }
.tray > svg:first-child { margin-top: 28px; }
.y1 { margin: 25px 0 0 15px; } .y2 { margin: 21px 0 0 21px; } .y3 { margin: 22px 0 0 27px; } .y4 { margin: 23px 0 0 12px; }
.clock { margin: 11px 0 0 23px; width: 93px; display: flex; flex-direction: column; align-items: flex-end; line-height: 23px; }
.badge { margin: 22px 0 0 11px; width: 24px; height: 24px; border-radius: 50%; background: #268393; color: #fff; font-size: 14px; line-height: 24px; text-align: center; }
</style>
